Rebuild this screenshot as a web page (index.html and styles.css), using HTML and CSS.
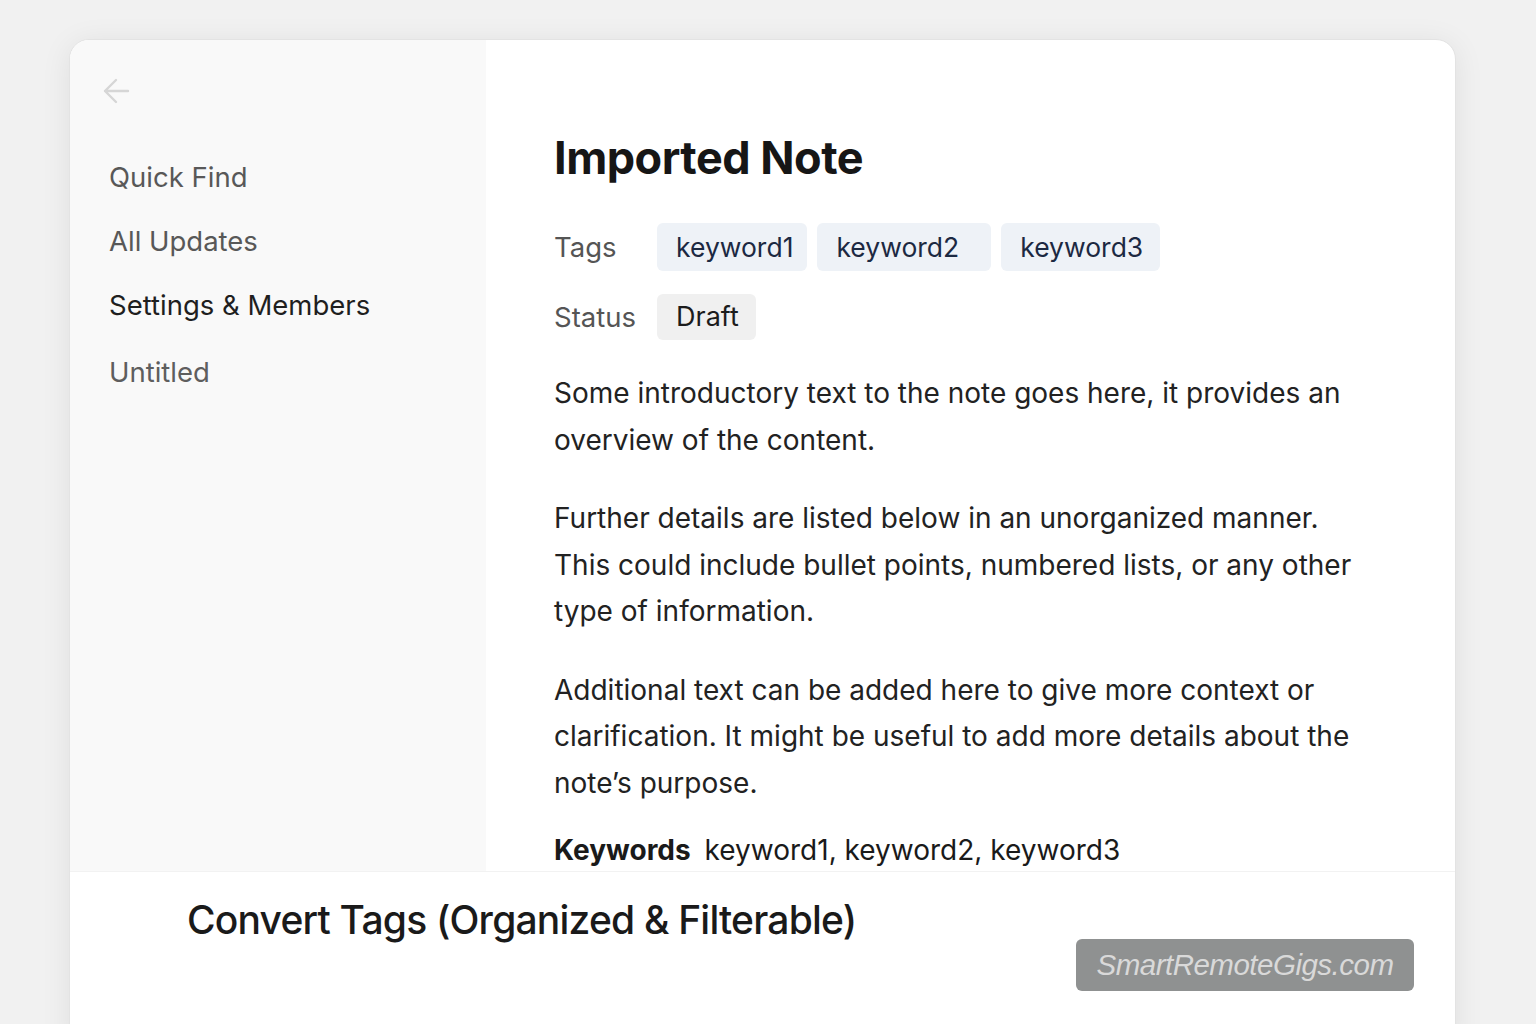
FILE: index.html
```html
<!DOCTYPE html>
<html>
<head>
<meta charset="utf-8">
<link rel="stylesheet" href="styles.css">
</head>
<body>
<div class="card">
  <div class="top">
    <aside class="sidebar">
      <div class="back">
        <svg width="30" height="30" viewBox="0 0 30 30"><path d="M27 15H4M15 4L4 15l11 11" fill="none" stroke="#d6d6d6" stroke-width="2.4" stroke-linecap="round" stroke-linejoin="round"/></svg>
      </div>
      <nav class="nav">
        <div class="nav-item">Quick Find</div>
        <div class="nav-item">All Updates</div>
        <div class="nav-item active">Settings &amp; Members</div>
        <div class="nav-item untitled">Untitled</div>
      </nav>
    </aside>
    <main class="main">
      <h1 class="title">Imported Note</h1>
      <div class="prop">
        <span class="prop-label">Tags</span>
        <div class="chips">
          <span class="chip tag">keyword1</span>
          <span class="chip tag tag2">keyword2</span>
          <span class="chip tag tag3">keyword3</span>
        </div>
      </div>
      <div class="prop">
        <span class="prop-label">Status</span>
        <span class="chip status">Draft</span>
      </div>
      <p class="para">Some introductory text to the note goes here, it provides an overview of the content.</p>
      <p class="para">Further details are listed below in an unorganized manner. This could include bullet points, numbered lists, or any other type of information.</p>
      <p class="para">Additional text can be added here to give more context or clarification. It might be useful to add more details about the note’s purpose.</p>
      <p class="keywords"><b>Keywords</b> keyword1, keyword2, keyword3</p>
    </main>
  </div>
  <div class="bottom">
    <div class="caption">Convert Tags (Organized &amp; Filterable)</div>
    <div class="watermark">SmartRemoteGigs.com</div>
  </div>
</div>
</body>
</html>
```
FILE: styles.css
```css
html, body {
  margin: 0;
  padding: 0;
}
body {
  background: #f1f1f1;
  width: 1536px;
  height: 1024px;
  overflow: hidden;
  font-family: Inter, "Noto Sans", sans-serif;
  color: #1a1a1a;
}
.card {
  margin: 39px 0 0 69px;
  width: 1385px;
  height: 1010px;
  background: #fff;
  border-radius: 20px;
  border: 1px solid #e3e3e3;
  box-shadow: 0 4px 30px rgba(0,0,0,0.08);
  overflow: hidden;
  display: flex;
  flex-direction: column;
}
.top {
  display: flex;
  height: 831px;
  border-bottom: 1px solid #f2f2f2;
}
.sidebar {
  width: 416px;
  background: #f9f9f9;
  padding: 36px 0 0 31px;
  box-sizing: border-box;
}
.back {
  height: 30px;
  line-height: 0;
}
.nav {
  margin-top: 39px;
  padding-left: 8px;
  display: flex;
  flex-direction: column;
}
.nav-item {
  font-size: 27.5px;
  color: #585858;
  height: 64px;
  line-height: 64px;
}
.nav-item.active {
  color: #1f1f1f;
}
.nav-item.untitled {
  margin-top: 3px;
  color: #5e5e5e;
}
.main {
  flex: 1;
  padding: 88px 0 0 68px;
}
.title {
  margin: 0 0 35px;
  font-size: 45px;
  font-weight: 700;
  letter-spacing: -0.5px;
  color: #161616;
  line-height: 60px;
}
.prop {
  display: flex;
  align-items: center;
  margin-bottom: 23px;
}
.prop-label {
  width: 103px;
  font-size: 27.5px;
  color: #555;
}
.chips {
  display: flex;
  gap: 10px;
}
.chip {
  display: inline-block;
  height: 48px;
  line-height: 48px;
  padding: 0 14px 0 19px;
  border-radius: 6px;
  font-size: 26.5px;
  box-sizing: border-box;
}
.tag {
  background: #eef2f7;
  color: #1c2942;
}
.tag2 { padding-right: 32px; }
.tag3 { padding-right: 17px; }
.status {
  background: #f0f0f0;
  color: #1c1c1c;
  height: 46px;
  line-height: 46px;
  padding: 0 17px 0 19px;
  font-size: 27px;
}
.para {
  margin: 30px 0 32px;
  font-size: 28px;
  line-height: 46.5px;
  color: #222;
  width: 815px;
}
.para + .para { margin-top: 0; }
.keywords {
  margin: -5px 0 0;
  font-size: 28px;
  color: #1a1a1a;
}
.keywords b {
  font-weight: 700;
  margin-right: 6px;
}
.bottom {
  position: relative;
  flex: 1;
  background: #fff;
  padding: 24px 0 0 117px;
}
.caption {
  font-size: 39px;
  font-weight: 500;
  color: #1a1a1a;
  letter-spacing: -0.8px;
}
.watermark {
  position: absolute;
  left: 1006px;
  top: 67px;
  width: 338px;
  height: 52px;
  border-radius: 6px;
  background: #8f9191;
  color: #d9d9d9;
  font-family: "Liberation Sans", Arial, sans-serif;
  font-style: italic;
  font-size: 29.5px;
  line-height: 52px;
  text-align: center;
  letter-spacing: -0.5px;
}
```
